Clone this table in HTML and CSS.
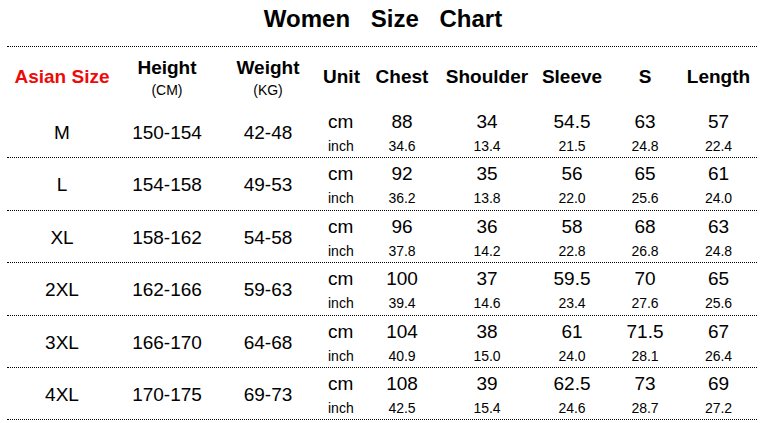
FILE: index.html
```html
<!DOCTYPE html>
<html>
<head>
<meta charset="utf-8">
<link rel="stylesheet" href="styles.css">
</head>
<body>
<div class="chart">
  <div class="title">Women Size Chart</div>
  <div class="row head">
    <div class="h asian">Asian Size</div>
    <div class="h two">Height<span class="sub">(CM)</span></div>
    <div class="h two">Weight<span class="sub">(KG)</span></div>
    <div class="h">Unit</div>
    <div class="h">Chest</div>
    <div class="h">Shoulder</div>
    <div class="h">Sleeve</div>
    <div class="h">S</div>
    <div class="h">Length</div>
  </div>

  <div class="row">
    <div class="big">M</div><div class="big">150-154</div><div class="big">42-48</div>
    <div class="pair unit"><span>cm</span><span>inch</span></div>
    <div class="pair"><span>88</span><span>34.6</span></div>
    <div class="pair"><span>34</span><span>13.4</span></div>
    <div class="pair"><span>54.5</span><span>21.5</span></div>
    <div class="pair"><span>63</span><span>24.8</span></div>
    <div class="pair"><span>57</span><span>22.4</span></div>
  </div>
  <div class="row">
    <div class="big">L</div><div class="big">154-158</div><div class="big">49-53</div>
    <div class="pair unit"><span>cm</span><span>inch</span></div>
    <div class="pair"><span>92</span><span>36.2</span></div>
    <div class="pair"><span>35</span><span>13.8</span></div>
    <div class="pair"><span>56</span><span>22.0</span></div>
    <div class="pair"><span>65</span><span>25.6</span></div>
    <div class="pair"><span>61</span><span>24.0</span></div>
  </div>
  <div class="row">
    <div class="big">XL</div><div class="big">158-162</div><div class="big">54-58</div>
    <div class="pair unit"><span>cm</span><span>inch</span></div>
    <div class="pair"><span>96</span><span>37.8</span></div>
    <div class="pair"><span>36</span><span>14.2</span></div>
    <div class="pair"><span>58</span><span>22.8</span></div>
    <div class="pair"><span>68</span><span>26.8</span></div>
    <div class="pair"><span>63</span><span>24.8</span></div>
  </div>
  <div class="row">
    <div class="big">2XL</div><div class="big">162-166</div><div class="big">59-63</div>
    <div class="pair unit"><span>cm</span><span>inch</span></div>
    <div class="pair"><span>100</span><span>39.4</span></div>
    <div class="pair"><span>37</span><span>14.6</span></div>
    <div class="pair"><span>59.5</span><span>23.4</span></div>
    <div class="pair"><span>70</span><span>27.6</span></div>
    <div class="pair"><span>65</span><span>25.6</span></div>
  </div>
  <div class="row">
    <div class="big">3XL</div><div class="big">166-170</div><div class="big">64-68</div>
    <div class="pair unit"><span>cm</span><span>inch</span></div>
    <div class="pair"><span>104</span><span>40.9</span></div>
    <div class="pair"><span>38</span><span>15.0</span></div>
    <div class="pair"><span>61</span><span>24.0</span></div>
    <div class="pair"><span>71.5</span><span>28.1</span></div>
    <div class="pair"><span>67</span><span>26.4</span></div>
  </div>
  <div class="row">
    <div class="big">4XL</div><div class="big">170-175</div><div class="big">69-73</div>
    <div class="pair unit"><span>cm</span><span>inch</span></div>
    <div class="pair"><span>108</span><span>42.5</span></div>
    <div class="pair"><span>39</span><span>15.4</span></div>
    <div class="pair"><span>62.5</span><span>24.6</span></div>
    <div class="pair"><span>73</span><span>28.7</span></div>
    <div class="pair"><span>69</span><span>27.2</span></div>
  </div>
</div>
</body>
</html>
```

FILE: styles.css
```css
html, body {
  margin: 0;
  padding: 0;
  background: #fff;
}
body {
  font-family: "Liberation Sans", Arial, sans-serif;
  color: #000;
}
.chart {
  width: 750px;
  margin-left: 7px;
}
.title {
  box-sizing: border-box;
  height: 47px;
  padding-top: 5px;
  font-size: 24px;
  line-height: 28px;
  font-weight: bold;
  text-align: center;
  word-spacing: 14px;
  padding-left: 2px;
  border-bottom: 1px dotted #000;
}
.row {
  display: grid;
  grid-template-columns: 110px 100px 102px 45px 76px 94px 76px 70px 77px;
  box-sizing: border-box;
  height: 52.4px;
  border-bottom: 1px dotted #000;
  text-align: center;
}
.row.head {
  height: 59px;
  border-bottom: none;
}
.h {
  font-size: 19px;
  font-weight: bold;
  line-height: 22px;
  padding-top: 19px;
}
.h.two {
  padding-top: 10px;
  display: flex;
  flex-direction: column;
  align-items: center;
}
.h .sub {
  font-size: 14px;
  font-weight: normal;
  line-height: 23px;
}
.h.asian {
  color: #ee0a0a;
}
.big {
  font-size: 19px;
  line-height: 22px;
  padding-top: 16px;
}
.pair {
  display: flex;
  flex-direction: column;
  align-items: center;
  padding-top: 5px;
}
.pair span:first-child {
  font-size: 19px;
  line-height: 22px;
}
.pair span:last-child {
  font-size: 14px;
  line-height: 26px;
}
.pair.unit {
  align-items: flex-start;
  padding-left: 9px;
}
```
